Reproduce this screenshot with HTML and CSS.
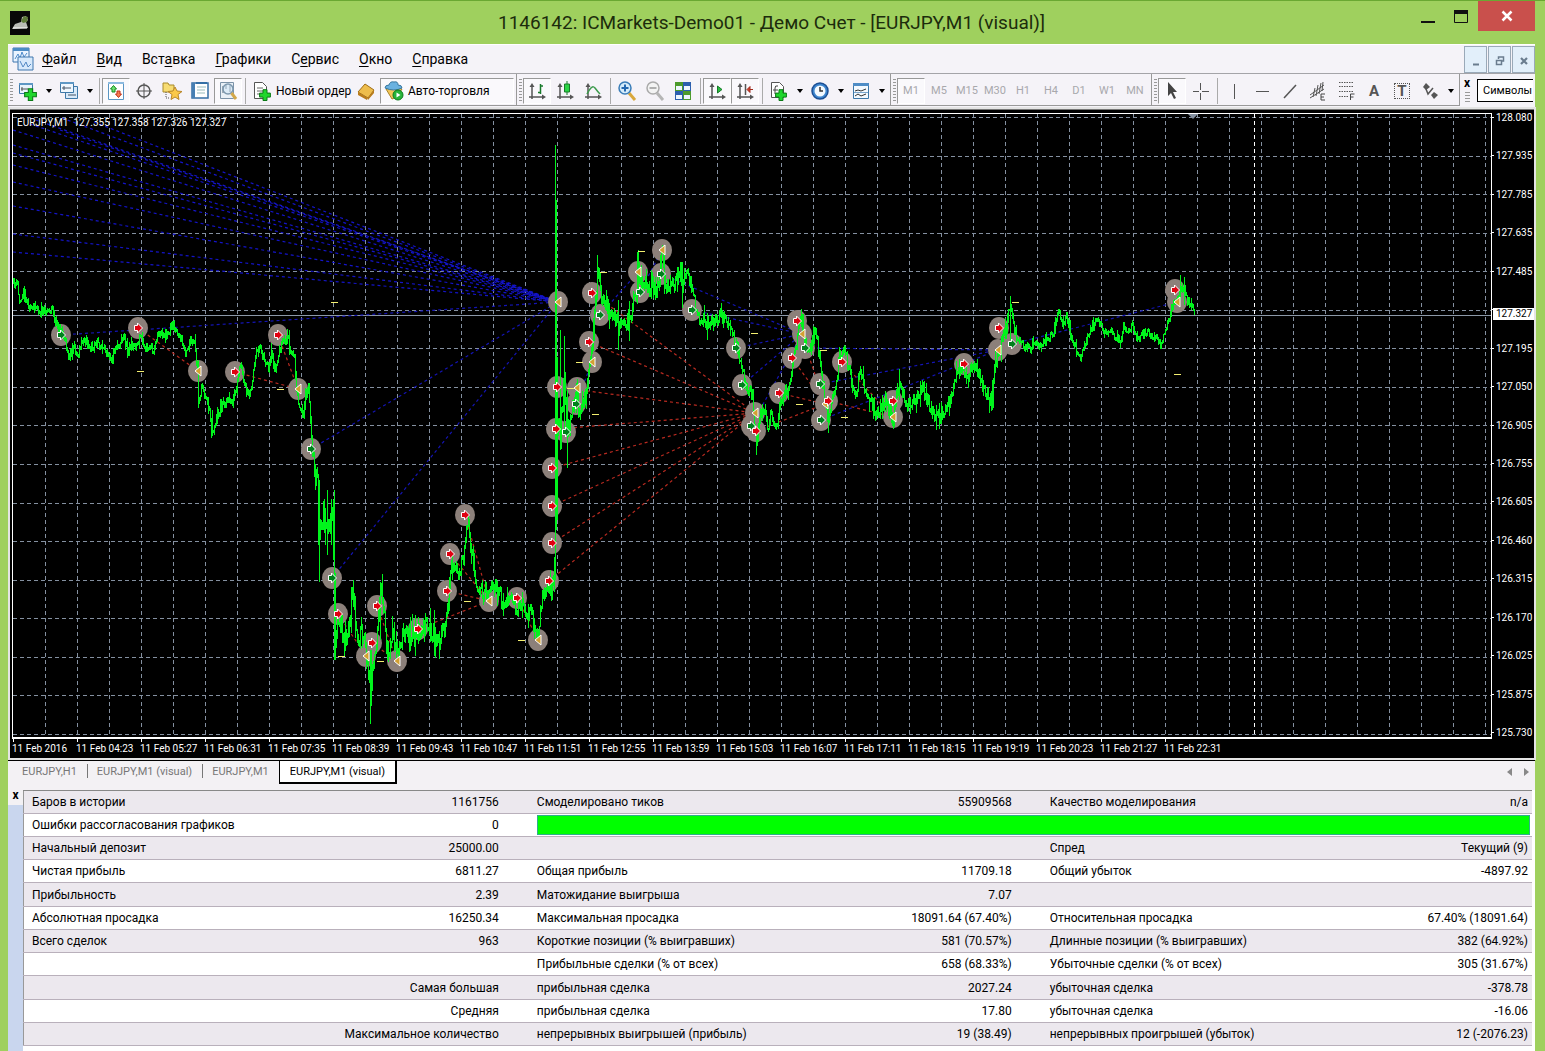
FILE: index.html
```html
<!DOCTYPE html>
<html lang="ru">
<head>
<meta charset="utf-8">
<title>1146142: ICMarkets-Demo01 - Демо Счет - [EURJPY,M1 (visual)]</title>
<link rel="stylesheet" href="styles.css">
</head>
<body>
<svg class="defs" aria-hidden="true">
  <symbol id="plus" viewBox="0 0 12 12"><path d="M4 .7h4v3.4h3.4v4H8v3.4H4V8.100H.6v-4H4z" fill="#1fd62c" stroke="#0b7a16"/></symbol>
  <symbol id="axes" viewBox="0 0 22 22"><path d="M6 5v14M3 17h15" stroke="#555" stroke-width="1.500" fill="none"/><path d="M6 3l-2.500 4h5zM20 17l-4-2.500v5z" fill="#555"/></symbol>
</svg>
<div class="window">
  <header class="titlebar">
    <svg class="app-icon" width="20" height="24" viewBox="0 0 20 24"><path d="M0 0h20v24H0z" fill="#080808"/><path d="M2 18l3-5 6-2 1-5 4-1 2 4-2 2 2 6z" fill="#b9bcb6"/><path d="M11 10l3-5 4 1-1 5-4 1z" fill="#5d7a38"/><path d="M3 17h14" stroke="#fff"/></svg>
    <h1>1146142: ICMarkets-Demo01 - Демо Счет - [EURJPY,M1 (visual)]</h1>
    <div class="caption">
      <button aria-label="Свернуть"><svg width="16" height="24"><path d="M1 21h14" stroke="#111" stroke-width="2"/></svg></button>
      <button aria-label="Развернуть"><svg width="16" height="24"><path d="M1.500 9.500h13v12h-13z" fill="none" stroke="#111"/><path d="M1 9h14v4H1z" fill="#111"/></svg></button>
      <button class="close" aria-label="Закрыть"><svg width="12" height="12"><path d="M1.500 1.500l9 9M10.500 1.500l-9 9" stroke="#fff" stroke-width="2.500"/></svg></button>
    </div>
  </header>

  <nav class="menubar">
    <svg width="22" height="26" viewBox="0 0 22 26"><path d="M1 2h16v14H1z" fill="#eaf4ff" stroke="#3f77ae"/><path d="M1 2h16v3H1z" fill="#4c8bc4"/><path d="M3 13l3-5 2 4 2-6 2 5 3-4" stroke="#4f8ccb" fill="none"/><path d="M6 11h15v13H6z" fill="#d7e9fb" stroke="#3f77ae"/><path d="M8 15l3 6 3-5 2 5 3-3" stroke="#5288c4" fill="none"/></svg>
    <a href="#"><u>Ф</u>айл</a><a href="#"><u>В</u>ид</a><a href="#">Вст<u>а</u>вка</a><a href="#"><u>Г</u>рафики</a><a href="#">С<u>е</u>рвис</a><a href="#"><u>О</u>кно</a><a href="#"><u>С</u>правка</a>
    <div class="mdi">
      <button aria-label="Свернуть окно"><svg width="10" height="10"><path d="M2 8.500h6" stroke="#6a7c8e" stroke-width="2"/></svg></button>
      <button aria-label="Восстановить окно"><svg width="10" height="10"><path d="M3.500 3V1h5v4H7M1.500 4.500h5v4h-5z" fill="none" stroke="#6a7c8e" stroke-width="1.500"/></svg></button>
      <button aria-label="Закрыть окно"><svg width="10" height="10"><path d="M2 2l6 6M8 2L2 8" stroke="#6a7c8e" stroke-width="2.200"/></svg></button>
    </div>
  </nav>

  <div class="toolbar">
    <div class="group">
      <i class="grip"></i>
      <button aria-label="Новый график"><svg width="22" height="22"><path d="M2.500 3.500h13v10h-13z" fill="#e8f3fc" stroke="#3d78a8"/><path d="M2 3h14v2H2z" fill="#5e97c4"/><path d="M5 7v4M4 9h7" stroke="#555"/><use href="#plus" x="7" y="8" width="13" height="13"/></svg></button>
      <button class="drop" aria-label="Список графиков"></button>
      <button aria-label="Профили"><svg width="22" height="22"><path d="M7.500 6.500h12v12h-12z" fill="#d8eafa" stroke="#3d78a8"/><path d="M2.500 2.500h13v10h-13z" fill="#eff7fe" stroke="#3d78a8"/><path d="M2 2h14v2H2z" fill="#5e97c4"/><path d="M4 8h9M6 6v4M10 15h8" stroke="#456"/></svg></button>
      <button class="drop" aria-label="Список профилей"></button>
      <i class="sep"></i>
      <button class="on" aria-label="Обзор рынка"><svg width="22" height="22"><path d="M3.500 2.500h15v17h-15z" fill="#fff" stroke="#5a96c4"/><path d="M3 2h16v2H3z" fill="#8dbbe0"/><path d="M8.500 5.500l3 3.500h-1.500v3H7V9H5.500z" fill="#6be070" stroke="#148a20"/><path d="M13.500 17.500l-3-3.500H12v-3h3v3h1.500z" fill="#f47a50" stroke="#c03018"/></svg></button>
      <button aria-label="Окно данных"><svg width="22" height="22"><circle cx="11" cy="11" r="6" fill="none" stroke="#555" stroke-width="1.500"/><path d="M11 3v16M3 11h16" stroke="#555"/></svg></button>
      <button aria-label="Навигатор"><svg width="22" height="22"><path d="M2 3h5l1 2h5v7H2z" fill="#f7dc72" stroke="#a88a2c"/><path d="M5 12v6h4" stroke="#555" stroke-dasharray="1 1" fill="none"/><path d="M14 7l2 4 5 .5-4 3 1 5-4-2.500-4 2.500 1-5-4-3 5-.5z" fill="#fbc94a" stroke="#b8862a"/></svg></button>
      <button aria-label="Терминал"><svg width="22" height="22"><path d="M3 3h16v15H3z" fill="#fff" stroke="#356fa5" stroke-width="1.500"/><path d="M3 3h3v15H3z" fill="#477fb3"/><path d="M7 3h11" stroke="#356fa5" stroke-width="2"/><path d="M8 7h9M8 10h8M8 13h8" stroke="#9bb"/></svg></button>
      <button class="on" aria-label="Тестер стратегий"><svg width="22" height="22"><path d="M3.500 2.500h13v16h-13z" fill="#e9f0f7" stroke="#7c93a8"/><path d="M6 13V6M9 9V4M13 12V5" stroke="#567"/><circle cx="11" cy="9" r="5" fill="#cfe6f7" fill-opacity=".5" stroke="#7d98ae" stroke-width="1.500"/><path d="M14.500 13l4.500 6" stroke="#d3a84a" stroke-width="3"/></svg></button>
      <i class="sep"></i>
      <button class="wide"><svg width="22" height="22"><path d="M3.500 2.500h8l4 4v12h-12z" fill="#fff" stroke="#555"/><path d="M6 8h6M6 11h6M6 14h4" stroke="#666"/><use href="#plus" x="8" y="9" width="12" height="12"/></svg>Новый ордер</button>
      <button aria-label="MetaEditor"><svg width="22" height="22"><path d="M3 12l7-8 9 6-6 8z" fill="#eebd4c" stroke="#a06e16"/><path d="M3 12l10 6-1 2L3 15zM13 18l6-8v3l-6 7z" fill="#b97c1c"/></svg></button>
      <button class="wide on auto"><svg width="22" height="22"><path d="M3 9l8-2 8 2-5 8-5 2z" fill="#f3c659" stroke="#a8842a"/><path d="M2 8q0-3 4-3 1-4 5-3 4-1 4 3 4 0 4 3-8 4-17 0z" fill="#69b1e0" stroke="#39789f"/><circle cx="15" cy="15" r="5" fill="#28b43a" stroke="#0c7a1c"/><path d="M13.500 12.500v5l4-2.500z" fill="#fff"/></svg>Авто-торговля</button>
    </div>
    <div class="group">
      <i class="grip"></i>
      <button class="on" aria-label="Бары"><svg width="22" height="22"><use href="#axes"/><path d="M14.500 14V4M12 12.500h3M14 6h3" stroke="#187a2b" stroke-width="1.500"/></svg></button>
      <button aria-label="Свечи"><svg width="22" height="22"><use href="#axes"/><path d="M13 1v14" stroke="#187a2b"/><path d="M10.500 4h5v8h-5z" fill="#2bd545" stroke="#187a2b"/></svg></button>
      <button aria-label="Линия"><svg width="22" height="22"><use href="#axes"/><path d="M5 14q5-10 8-6t5 6" fill="none" stroke="#3c9a4c" stroke-width="1.500"/></svg></button>
      <i class="sep"></i>
      <button aria-label="Приблизить"><svg width="22" height="22"><path d="M13 13l6 7" stroke="#d9a83c" stroke-width="3"/><circle cx="9" cy="8" r="6" fill="#d5ecfb" stroke="#3a7db8" stroke-width="1.500"/><path d="M9 4.500v7M5.500 8h7" stroke="#2468b0" stroke-width="2"/></svg></button>
      <button aria-label="Отдалить"><svg width="22" height="22"><path d="M13 13l6 7" stroke="#b5b5b5" stroke-width="3"/><circle cx="9" cy="8" r="6" fill="#f3f3f3" stroke="#aaa" stroke-width="1.500"/><path d="M5.500 8h7" stroke="#999" stroke-width="1.500"/></svg></button>
      <button aria-label="Окна мозаикой"><svg width="22" height="22"><path d="M3 2h8v9H3zM11 11h8v9h-8z" fill="#4c9a2c"/><path d="M11 2h8v9h-8zM3 11h8v9H3z" fill="#2c5fae"/><path d="M4 6h6v4H4zM12 6h6v4h-6zM4 15h6v4H4zM12 15h6v4h-6z" fill="#eef6ff"/></svg></button>
      <i class="sep"></i>
      <button class="on" aria-label="Автопрокрутка"><svg width="22" height="22"><use href="#axes"/><path d="M11.500 6l4.500 3.500-4.500 3.500z" fill="#2abf40" stroke="#187a2b"/></svg></button>
      <button class="on" aria-label="Сдвиг графика"><svg width="22" height="22"><use href="#axes"/><path d="M11.500 4v11" stroke="#555" stroke-width="1.500"/><path d="M13 9.500l3-3v6zM16 9.500h3" fill="#d2402e" stroke="#a02a1c"/></svg></button>
      <i class="sep"></i>
      <button aria-label="Индикаторы"><svg width="22" height="22"><path d="M3.500 2.500h8l4 4v11h-12z" fill="#fff" stroke="#555"/><path d="M7 14V8q0-3 3-2M5 10h5" stroke="#444" fill="none"/><use href="#plus" x="7" y="9" width="12" height="12"/></svg></button>
      <button class="drop" aria-label="Список индикаторов"></button>
      <button aria-label="Периоды"><svg width="22" height="22"><circle cx="11" cy="11" r="8" fill="#3d86cf" stroke="#1c4f94" stroke-width="1.500"/><circle cx="11" cy="11" r="5.500" fill="#f4faff"/><path d="M11 7v4h3" stroke="#333" fill="none" stroke-width="1.500"/></svg></button>
      <button class="drop" aria-label="Список периодов"></button>
      <button aria-label="Шаблоны"><svg width="22" height="22"><path d="M3.500 3.500h15v15h-15z" fill="#f4faff" stroke="#3d78a8"/><path d="M3 3h16v3H3z" fill="#4f8dc6"/><path d="M5 11l3-1 3 1 5-2M5 16l3-2 3 2 5-2" stroke="#333" fill="none"/><path d="M4 12.500h14" stroke="#7aa6cc"/></svg></button>
      <button class="drop" aria-label="Список шаблонов"></button>
    </div>
    <div class="group frames">
      <i class="grip"></i>
      <button class="on">M1</button><button>M5</button><button>M15</button><button>M30</button><button>H1</button><button>H4</button><button>D1</button><button>W1</button><button>MN</button>
    </div>
    <div class="group">
      <i class="grip"></i>
      <button class="on" aria-label="Курсор"><svg width="22" height="22"><path d="M7 2v14l3-3 3 6 2-1-3-6h4z" fill="#444"/></svg></button>
      <button aria-label="Перекрестие"><svg width="22" height="22"><path d="M11.500 3v7M11.500 13v7M4 11.500h6M13 11.500h7" stroke="#555"/></svg></button>
      <i class="sep"></i>
      <button aria-label="Вертикальная линия"><svg width="22" height="22"><path d="M11.500 4v15" stroke="#555"/></svg></button>
      <button aria-label="Горизонтальная линия"><svg width="22" height="22"><path d="M5 11.500h13" stroke="#555"/></svg></button>
      <button aria-label="Трендовая линия"><svg width="22" height="22"><path d="M5 18L17 5" stroke="#555" stroke-width="1.500"/></svg></button>
      <button aria-label="Равноудаленный канал"><svg width="22" height="22"><path d="M3 15L17 5M3 18L17 9M6 17l2-9M9 16l2-11M12 14l2-11M15 11l1-9" stroke="#555"/><path d="M18 14h-4v6h4M14 17h3" stroke="#444" fill="none"/></svg></button>
      <button aria-label="Фибоначчи"><svg width="22" height="22"><path d="M4 2.500h14M4 6.500h14M4 11.500h14M4 16.500h9" stroke="#555" stroke-dasharray="1.500 1"/><path d="M15.500 20v-6h4M15.500 17h3" stroke="#444" fill="none"/></svg></button>
      <button class="glyph" aria-label="Текст">A</button>
      <button class="glyph" aria-label="Метка"><span class="boxed">T</span></button>
      <button aria-label="Стрелки"><svg width="22" height="22"><path d="M7 3l4 4-4 3-3-3zM15 12l4 3-4 4-3-4z" fill="#555"/><path d="M7 9l2 5 5-6" stroke="#555" fill="none" stroke-width="1.500"/></svg></button>
      <button class="drop" aria-label="Список стрелок"></button>
    </div>
    <div class="symbols">
      <div class="dock"><button aria-label="Закрыть панель">x</button><i class="grip"></i></div>
      <button class="symbol-button">Символы</button>
    </div>
  </div>

  <main class="chart">
    <div class="plot">
      <svg id="plot" width="100%" height="100%"></svg>
      <p class="quote">EURJPY,M1&nbsp; 127.355 127.358 127.326 127.327</p>
    </div>
    <ul class="prices">
      <li>128.080<li>127.935<li>127.785<li>127.635<li>127.485<li><li>127.195<li>127.050<li>126.905<li>126.755<li>126.605<li>126.460<li>126.315<li>126.170<li>126.025<li>125.875<li>125.730
    </ul>
    <span class="current">127.327</span>
    <ul class="times">
      <li>11 Feb 2016<li>11 Feb 04:23<li>11 Feb 05:27<li>11 Feb 06:31<li>11 Feb 07:35<li>11 Feb 08:39<li>11 Feb 09:43<li>11 Feb 10:47<li>11 Feb 11:51<li>11 Feb 12:55<li>11 Feb 13:59<li>11 Feb 15:03<li>11 Feb 16:07<li>11 Feb 17:11<li>11 Feb 18:15<li>11 Feb 19:19<li>11 Feb 20:23<li>11 Feb 21:27<li>11 Feb 22:31
    </ul>
  </main>

  <nav class="tabs">
    <a href="#">EURJPY,H1</a><a href="#">EURJPY,M1 (visual)</a><a href="#">EURJPY,M1</a><a href="#" class="active">EURJPY,M1 (visual)</a>
    <div class="scroll"><button aria-label="Влево"><svg width="5" height="8"><path d="M5 0v8L0 4z" fill="#888"/></svg></button><button aria-label="Вправо"><svg width="5" height="8"><path d="M0 0v8l5-4z" fill="#888"/></svg></button></div>
  </nav>

  <section class="report">
    <div class="side"><button aria-label="Закрыть">x</button></div>
    <table>
      <colgroup><col class="c1"><col class="c2"><col class="c3"><col class="c4"><col class="c5"><col class="c6"></colgroup>
      <tr><td>Баров в истории<td>1161756<td>Смоделировано тиков<td>55909568<td>Качество моделирования<td>n/a
      <tr><td>Ошибки рассогласования графиков<td>0<td colspan="4" class="quality"><div class="bar"></div>
      <tr><td>Начальный депозит<td>25000.00<td><td><td>Спред<td>Текущий (9)
      <tr><td>Чистая прибыль<td>6811.27<td>Общая прибыль<td>11709.18<td>Общий убыток<td>-4897.92
      <tr><td>Прибыльность<td>2.39<td>Матожидание выигрыша<td>7.07<td><td>
      <tr><td>Абсолютная просадка<td>16250.34<td>Максимальная просадка<td>18091.64 (67.40%)<td>Относительная просадка<td>67.40% (18091.64)
      <tr><td>Всего сделок<td>963<td>Короткие позиции (% выигравших)<td>581 (70.57%)<td>Длинные позиции (% выигравших)<td>382 (64.92%)
      <tr><td><td><td>Прибыльные сделки (% от всех)<td>658 (68.33%)<td>Убыточные сделки (% от всех)<td>305 (31.67%)
      <tr><td><td>Самая большая<td>прибыльная сделка<td>2027.24<td>убыточная сделка<td>-378.78
      <tr><td><td>Средняя<td>прибыльная сделка<td>17.80<td>убыточная сделка<td>-16.06
      <tr><td><td>Максимальное количество<td>непрерывных выигрышей (прибыль)<td>19 (38.49)<td>непрерывных проигрышей (убыток)<td>12 (-2076.23)
    </table>
  </section>
</div>
<script src="chart.js"></script>
</body>
</html>
```
FILE: styles.css
```css
* { box-sizing: border-box; }
body {
  margin: 0;
  background: #9fd05e;
  color: #000;
  font: 12px/16px Roboto, "Open Sans", sans-serif;
}
button { margin: 0; padding: 0; border: 0; background: none; font: inherit; color: inherit; }
a { color: inherit; text-decoration: none; }
ul { margin: 0; padding: 0; list-style: none; }
svg { display: block; flex: none; }
.defs { position: absolute; width: 0; height: 0; }

.window { min-height: 100vh; padding: 0 10px 0 8px; border-top: 1px solid #6aa832; display: flex; flex-direction: column; }

.titlebar { height: 43px; display: grid; grid-template-columns: 1fr auto 1fr; align-items: center; }
.app-icon { margin-left: 2px; }
.titlebar h1 { margin: 0; font-size: 19px; line-height: 28px; font-weight: 400; color: #1c2c0c; }
.caption { align-self: start; display: flex; align-items: flex-start; justify-content: flex-end; gap: 17px; }
.caption .close { width: 57px; height: 30px; margin-left: -8px; background: #c9504c; display: grid; place-items: center; }

.menubar { height: 30px; background: #f5f3f8; border-top: 1px solid #fff; border-bottom: 1px solid #a4a4a8; display: flex; align-items: center; gap: 20px; padding-left: 4px; font-size: 14px; line-height: 20px; }
.menubar > svg { margin-right: -12px; }
.menubar u { text-underline-offset: 2px; }
.mdi { margin-left: auto; display: flex; gap: 1px; }
.mdi button { width: 23px; height: 27px; border: 1px solid #9aa9b8; background: #e2effa; display: grid; place-items: center; padding-top: 4px; }

.toolbar { height: 34px; background: #f5f3f8; display: flex; border-bottom: 1px solid #fff; overflow: hidden; }
.group { height: 32px; display: flex; align-items: center; border-right: 1px solid #999; border-bottom: 1px solid #999; padding: 2px 2px 0 0; flex: none; }
.group button { width: 28px; height: 26px; display: flex; align-items: center; justify-content: center; flex: none; border: 1px solid transparent; white-space: nowrap; }
.group .on { border-color: #999 #fff #fff #999; background: #faf9fc; }
.group .drop { width: 13px; }
.drop::before { content: ""; border: 3px solid transparent; border-top: 4px solid #000; border-bottom: 0; }
.group .wide { width: 104px; justify-content: flex-start; padding-left: 2px; gap: 3px; }
.group .auto { width: 134px; }
.grip { width: 6px; height: 24px; flex: none; background: repeating-linear-gradient(#999 0 1px, transparent 1px 3px) content-box; padding: 0 1px 0 2px; }
.sep { width: 2px; height: 26px; flex: none; border-left: 1px solid #aaa; margin: 0 1px 0 3px; }
.frames { color: #a8a8ac; font-size: 11px; }
.glyph { color: #555; font-weight: 700; font-size: 15px; }
.boxed { border: 1px dotted #555; line-height: 14px; padding: 0 2px; }
.symbols { flex: 1; min-width: 0; display: flex; align-items: center; gap: 6px; padding-left: 3px; overflow: hidden; }
.dock { display: flex; flex-direction: column; align-items: center; width: 8px; }
.dock button { font-weight: 700; line-height: 10px; font-size: 12px; }
.dock .grip { height: 12px; width: 8px; margin-top: 4px; }
.symbol-button { flex: none; height: 23px; padding: 0 1px 0 5px; background: #fff; border: 1px solid #000; border-right: 0; font-size: 11px; }

.chart { position: relative; height: 649px; margin: 1px 1px 0 2px; background: #000; color: #fff; border-top: 1px solid #777; box-shadow: 0 0 0 2px #e4e4e4; font-size: 10px; line-height: 12px; display: grid; grid-template-columns: minmax(0, 1fr) 42px; grid-template-rows: 629px 19px; padding-left: 2px; }
.plot { margin-top: 3px; border: 1px solid #fff; border-bottom-width: 2px; position: relative; overflow: hidden; }
.quote { position: absolute; left: 4px; top: 3px; margin: 0; }
.prices { display: flex; flex-direction: column; justify-content: space-between; padding: 2px 0 0 4px; }
.prices li { height: 12px; }
.prices li, .times li { position: relative; }
.prices li::before { content: ""; position: absolute; left: -4px; top: 5px; width: 2px; height: 1px; background: #fff; }
.current { position: absolute; right: 0; top: 198px; width: 41px; padding-left: 3px; background: #fff; color: #000; }
.times { grid-column: 1 / -1; display: flex; overflow: hidden; }
.times li { flex: 0 0 64px; min-width: 0; padding-top: 4px; white-space: nowrap; }
.times li::before { content: ""; position: absolute; left: 1px; top: 0; width: 1px; height: 3px; background: #fff; }

.tabs { margin-top: 2px; height: 30px; background: #f3f1f4; border-top: 1px solid #000; display: flex; align-items: flex-start; color: #777; padding-left: 4px; font-size: 11px; position: relative; }
.tabs a { padding: 3px 10px 2px; line-height: 16px; position: relative; }
.tabs a + a:not(.active)::before { content: ""; position: absolute; left: 0; top: 3px; height: 14px; border-left: 1px solid #777; }
.tabs .active { background: #fff; color: #000; border: 1px solid #000; border-width: 0 2px 2px 1px; }
.scroll { margin-left: auto; display: flex; gap: 12px; padding: 7px 6px; }

.report { flex: 1; display: flex; background: #fff; }
.side { width: 15px; background: #c9d6ee; }
.side button { display: block; width: 100%; height: 15px; background: #f3f1f4; font-weight: 700; line-height: 10px; padding-bottom: 5px; }
.report table { flex: 1; align-self: flex-start; table-layout: fixed; border-collapse: collapse; border-left: 1px solid #999; border-top: 1px solid #888; margin-right: 3px; }
.report tr { height: 23px; }
.report tr:nth-child(4n+5) { height: 24px; }
.report tr:nth-child(odd) { background: #ece8ee; }
.report td { padding: 0 0 0 8px; border-bottom: 1px solid #b9b0bb; white-space: nowrap; line-height: 16px; }
.report td:nth-child(even) { text-align: right; padding: 0 30px 0 0; }
.report td:nth-child(6) { padding-right: 4px; }
.report .quality { padding: 0 2px 0 8px; }
.bar { height: 20px; background: #0f0; border: 1px solid #2fae8c; }
.c1, .c3, .c4 { width: 17%; }
.c2, .c5 { width: 16.5%; }
.c6 { width: 16%; }
```
FILE: chart.js
```js
// Window coordinates of the plot's inner corner; all data below uses them.
const X0 = 13, Y0 = 114, LAST = 1194;
const path = [[13,283],[17,283],[19,303],[22,292],[26,298],[31,311],[35,303],[40,312],[45,310],[52,308],[55,325],[60,328],[66,345],[69,355],[73,345],[77,355],[80,345],[85,338],[90,348],[97,342],[103,350],[107,350],[111,358],[115,346],[120,342],[123,336],[127,350],[131,345],[136,345],[140,335],[146,348],[150,345],[154,350],[157,332],[162,332],[166,338],[172,323],[177,332],[181,340],[185,350],[190,342],[194,344],[197,370],[198,400],[202,385],[208,405],[212,432],[217,415],[221,405],[226,400],[232,402],[236,390],[240,363],[244,385],[249,398],[253,370],[256,355],[259,345],[263,355],[268,372],[271,355],[275,370],[279,350],[283,340],[287,337],[291,350],[294,360],[296,385],[299,408],[304,412],[306,390],[308,395],[311,430],[314,475],[317,480],[318,540],[322,520],[323,510],[326,535],[329,520],[333,515],[334,570],[335,640],[337,620],[341,635],[346,640],[350,615],[352,592],[356,635],[361,635],[365,650],[368,665],[370,700],[373,660],[376,640],[379,605],[381,595],[384,620],[388,655],[392,625],[394,640],[397,658],[400,640],[406,628],[412,640],[418,635],[424,625],[430,630],[438,640],[445,625],[448,600],[450,570],[454,565],[458,575],[463,560],[466,535],[468,522],[470,545],[473,560],[477,590],[482,590],[487,590],[494,585],[499,595],[504,605],[510,600],[516,608],[522,600],[527,618],[531,610],[536,638],[539,625],[542,595],[547,590],[552,585],[554,560],[556,430],[560,430],[564,370],[566,430],[570,420],[575,395],[580,410],[586,390],[590,360],[593,330],[596,290],[598,275],[601,300],[605,300],[610,320],[614,315],[618,325],[624,325],[631,310],[636,290],[638,265],[642,285],[648,290],[651,285],[656,290],[660,265],[662,253],[664,275],[668,285],[674,283],[680,272],[682,285],[686,270],[690,285],[695,305],[700,318],[706,323],[714,322],[720,312],[728,325],[734,342],[738,350],[742,370],[746,385],[752,395],[754,420],[756,440],[760,415],[763,410],[768,428],[771,410],[775,433],[779,410],[784,395],[790,380],[794,355],[798,330],[801,318],[804,340],[808,345],[812,340],[816,330],[818,355],[822,380],[825,400],[828,420],[832,395],[836,385],[838,360],[844,348],[850,375],[855,395],[860,372],[866,395],[870,398],[876,413],[884,400],[893,420],[895,400],[899,378],[903,395],[909,408],[915,400],[921,386],[926,395],[930,405],[936,417],[944,412],[950,400],[956,375],[962,367],[968,375],[975,362],[982,385],[988,395],[992,403],[994,365],[999,350],[1004,330],[1008,315],[1010,308],[1014,330],[1018,340],[1025,347],[1030,349],[1033,340],[1038,348],[1046,338],[1052,335],[1059,310],[1062,328],[1066,315],[1072,340],[1079,358],[1086,340],[1092,324],[1097,320],[1103,330],[1110,330],[1120,342],[1123,325],[1126,335],[1132,325],[1136,338],[1145,332],[1155,336],[1160,346],[1166,328],[1172,305],[1180,290],[1184,285],[1187,300],[1191,305],[1194,313]];
const spikes = [[555,145,580],[556,200,530],[557,357,520],[560,330,450],[564,336,430],[567,390,468],[370,650,724],[371,650,704],[334,490,660],[319,480,582],[327,490,555],[331,500,545],[333,500,560],[198,360,408],[212,410,436],[597,255,300],[618,300,350],[638,250,290],[637,252,290],[380,582,640],[392,616,640],[682,262,308],[899,369,400],[756,430,455],[828,400,433],[1010,296,340],[936,405,430],[992,380,410],[1180,275,300],[1184,277,305]];
const levels = [130,145,153,165,182,206,234,252];
const over = [[30,118],[62,118],[94,122],[60,130],[30,124]];
const target = [558,302];
const blue = [[61,335,558,302],[311,449,558,302],[332,578,558,302],[576,404,592,362],[600,315,638,272],[640,292,662,250],[661,274,802,334],[692,310,802,334],[736,348,802,334],[742,385,802,334],[751,426,802,334],[805,348,998,350],[820,384,998,350],[821,420,998,350],[1012,344,1177,302]];
const red = [[557,387],[556,429],[552,468],[552,506],[552,543],[549,581],[589,342],[592,293]].map(p => [...p, 755, 413]).concat([[138,328,198,371],[235,372,298,389],[278,335,298,389],[338,614,366,656],[377,606,397,661],[372,643,397,661],[418,629,489,601],[447,591,489,601],[450,554,489,601],[465,515,489,601],[517,598,538,640],[756,431,825,404],[779,393,825,404],[792,358,825,404],[797,321,825,404],[842,362,893,417],[828,401,893,417]]);
const marks = "g61,335 r138,328 y198,371 r235,372 r278,335 y298,389 g311,449 g332,578 r338,614 y366,656 r372,643 r377,606 y397,661 r418,629 r447,591 r450,554 r465,515 y489,601 r517,598 y538,640 r549,581 r552,543 r552,506 r552,468 g566,432 r556,429 r557,387 g576,404 y577,388 y592,362 r589,342 g600,315 r592,293 y558,302 y638,272 g640,292 g661,274 y662,250 g692,310 g736,348 g742,385 g751,426 r756,431 y755,413 r779,393 r792,358 y802,334 r797,321 g805,348 g820,384 y825,404 r828,401 g821,420 r842,362 y893,417 r893,401 r964,364 y998,350 r999,328 g1012,344 y1177,302 r1175,290".split(" ");
const stops = [[334,302],[140,371],[280,389],[341,656],[380,661],[467,601],[521,640],[641,251],[603,272],[579,362],[595,414],[570,388],[754,333],[823,350],[799,404],[844,417],[1015,302],[1177,374]];

let seed = 11;
const rnd = () => (seed = (seed * 16807) % 2147483647) / 2147483647;

function spread(x) {
  if (x < 190) return 8;
  if (x < 305) return 9;
  if (x < 440) return 19;
  if (x < 550) return 14;
  if (x < 670) return 19;
  if (x < 1020) return 12;
  return 7;
}

function bars() {
  let d = "", k = 0, prev = path[0][1];
  for (let x = X0; x <= LAST; x++) {
    while (k < path.length - 2 && path[k + 1][0] < x) k++;
    const [ax, ay] = path[k], [bx, by] = path[k + 1];
    const mid = ay + (by - ay) * (x - ax) / (bx - ax);
    const s = spread(x);
    const close = mid + (rnd() - .5) * s;
    const tail = rnd() > .75 ? s * .9 : s * .3;
    const top = Math.min(prev, close) - rnd() * tail;
    const low = Math.max(prev, close) + rnd() * tail;
    d += `M${x + .5} ${Math.round(top)}V${Math.round(low) + 1}`;
    prev = close;
  }
  for (const [x, a, b] of spikes) d += `M${x + .5} ${a}V${b}`;
  return d;
}

const line = (p, color) => `<path d="M${p[0]} ${p[1]}L${p[2]} ${p[3]}" stroke="${color}"/>`;
let out = "";
const grid = 'stroke="#8490a0" stroke-dasharray="4 3" shape-rendering="crispEdges"';
for (let i = 0; i < 17; i++) {
  const y = Math.round(117 + i * 38.56) - Y0 + .5;
  out += `<line x1="0" x2="100%" y1="${y}" y2="${y}" ${grid}/>`;
}
for (let x = 45; x < 4000; x += 32) out += `<line x1="${x - X0 + .5}" x2="${x - X0 + .5}" y1="0" y2="100%" ${grid}/>`;
out += `<line x1="0" x2="100%" y1="201.5" y2="201.5" stroke="#8b98a8"/>`;
out += `<line x1="1241.5" x2="1241.5" y1="0" y2="100%" stroke="#fff" stroke-dasharray="4 3"/>`;
out += `<g transform="translate(${-X0} ${-Y0})" fill="none">`;
out += `<path d="M1188 114h10l-5 5z" fill="#8490a0"/>`;
out += '<g stroke-dasharray="3 3" stroke-width="1.2">';
for (const y of levels) out += line([X0, y, ...target], "#1414c8");
for (const p of over) out += line([...p, ...target], "#1414c8");
for (const p of blue) out += line(p, "#1414b4");
for (const p of red) out += line(p, "#b82a20");
out += "</g>";
const places = marks.map(m => [m[0], ...m.slice(1).split(",")]);
for (const [, x, y] of places) out += `<ellipse cx="${x}" cy="${y}" rx="10" ry="11" fill="#8c807a"/>`;
out += `<path d="${bars()}" stroke="#00f41c" shape-rendering="crispEdges"/>`;
for (const [x, y] of stops) out += `<path d="M${x - 3} ${y + .5}h7" stroke="#f4f070" shape-rendering="crispEdges"/>`;
const arrow = "M-3.500-2.500h3V-5L4.500 0-.5 5V2.500h-3z";
for (const [t, x, y] of places) {
  out += `<g transform="translate(${x} ${y})" stroke="#fff">`;
  if (t === "y") out += '<path d="M3-5V5L-3 0z" fill="#d2a032"/>';
  else out += `<path d="${arrow}" fill="${t === "r" ? "#e00010" : "#00801c"}"/>`;
  out += "</g>";
}
document.getElementById("plot").innerHTML = out + "</g>";
```
